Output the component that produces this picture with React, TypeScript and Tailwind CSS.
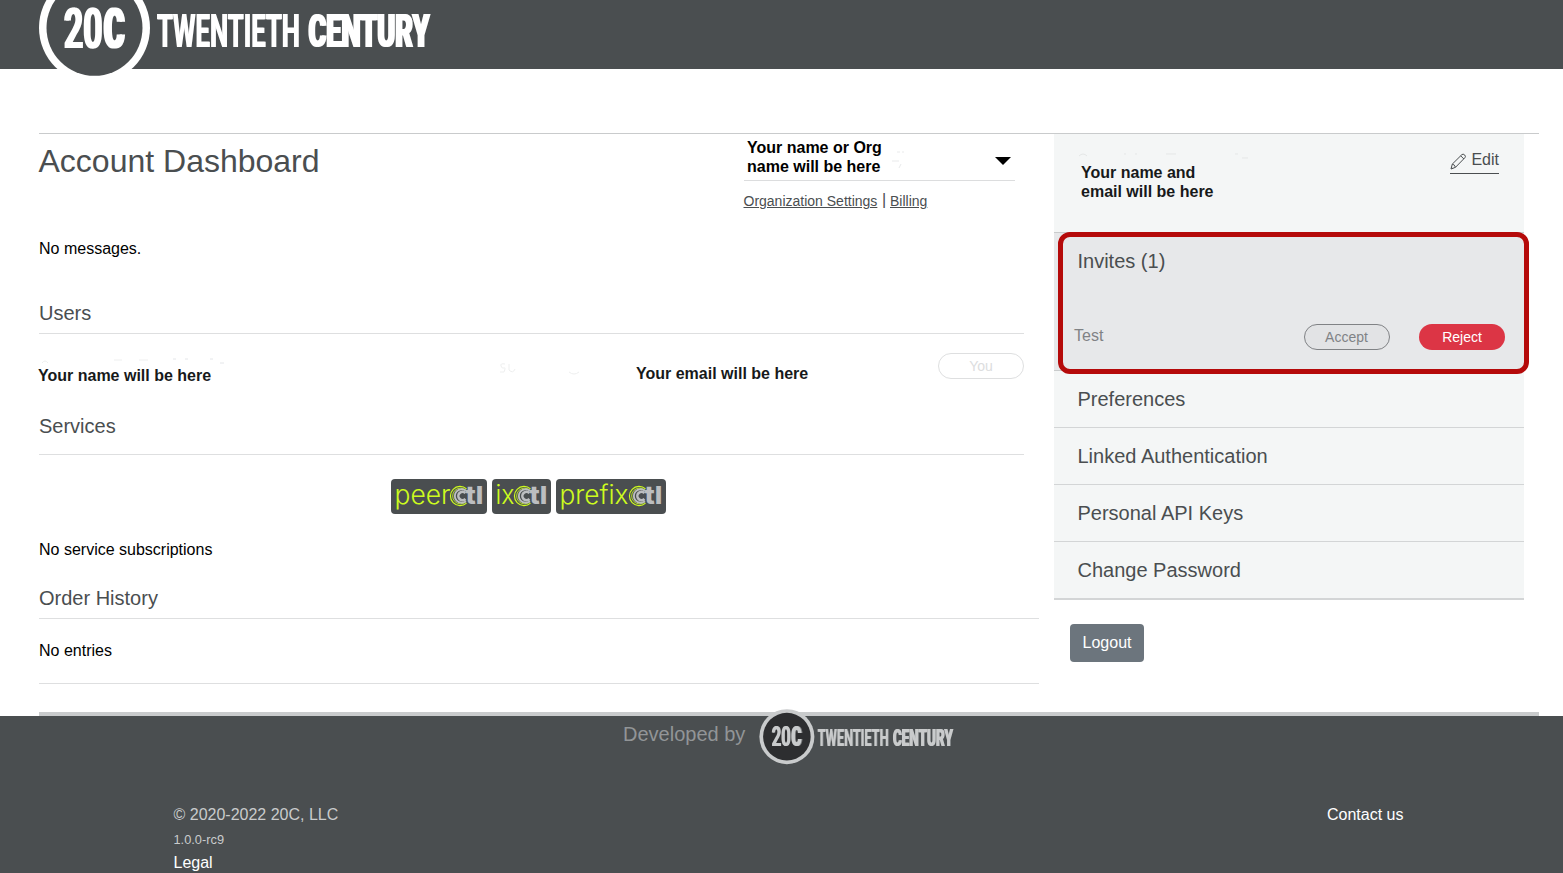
import React from 'react';

type Tone = { ring: string; disc: string; text: string };

function CenturyLogo({ tone, className }: { tone: Tone; className: string }) {
  return (
    <svg viewBox="0 0 394 112" className={className} role="img" aria-label="20C Twentieth Century">
      <circle cx="55.5" cy="55.8" r="55.5" fill={tone.ring} />
      <circle cx="55.5" cy="55.8" r="48" fill={tone.disc} />
      <g fill={tone.text} color={tone.text} className="font-['Roboto']">
        <g className="[filter:drop-shadow(1.4px_0_0)]">
          <text x="0" y="0" transform="translate(117.5 75) scale(.5 1)" fontSize="47" fontWeight="700" textLength="286" lengthAdjust="spacingAndGlyphs">TWENTIETH</text>
        </g>
        <g className="[filter:drop-shadow(2px_0_0)]">
          <text x="0" y="0" transform="translate(24 75.5) scale(.6 1)" fontSize="55" fontWeight="700" textLength="64" lengthAdjust="spacingAndGlyphs">20</text>
          <text x="0" y="0" transform="translate(268.5 75) scale(.5 1)" fontSize="47" fontWeight="900" textLength="242" lengthAdjust="spacingAndGlyphs">CENTURY</text>
        </g>
        <g className="[filter:drop-shadow(3px_0_0)]">
          <text x="0" y="0" transform="translate(63.5 75.5) scale(.6 1)" fontSize="55" fontWeight="900" textLength="34" lengthAdjust="spacingAndGlyphs">C</text>
        </g>
      </g>
    </svg>
  );
}

function CtlBadge({ name, nameWidth, width, className }: { name: string; nameWidth: number; width: number; className: string }) {
  const c = width - 28;
  return (
    <svg viewBox={`0 0 ${width} 35`} className={className} role="img" aria-label={`${name}Ctl`}>
      <rect width={width} height="35" rx="4" fill="#4a4e50" />
      <text x="3.5" y="25" fill="#cdfb1e" className="font-['Inter']" fontWeight="300" fontSize="26" textLength={nameWidth} lengthAdjust="spacingAndGlyphs">{name}</text>
      <g fill="none" strokeLinecap="butt">
        <path d={`M${c + 7.5} 9.9A9.6 9.6 0 1 0 ${c + 7.5} 24.1`} stroke="#cdfb1e" strokeWidth="1.2" />
        <path d={`M${c + 7} 11.3A7.9 7.9 0 1 0 ${c + 7} 22.7`} stroke="#cdfb1e" strokeWidth="0.8" />
        <path d={`M${c + 7} 11.8A6.8 6.8 0 1 0 ${c + 7} 22.2`} stroke="#bcbec0" strokeWidth="1.9" />
        <path d={`M${c + 6.5} 14A4.2 4.2 0 1 0 ${c + 6.5} 20`} stroke="#bcbec0" strokeWidth="2.6" />
      </g>
      <text x={width - 21.5} y="25" fill="#bcbec0" className="font-['Inter']" fontWeight="800" fontSize="25" textLength="18" lengthAdjust="spacingAndGlyphs">tl</text>
    </svg>
  );
}

const headerTone: Tone = { ring: '#ffffff', disc: '#4a4e50', text: '#ffffff' };
const footerTone: Tone = { ring: '#c9cbcc', disc: '#2d2e30', text: '#c9cbcc' };

const panels = ['Preferences', 'Linked Authentication', 'Personal API Keys', 'Change Password'];

export default function App() {
  return (
    <div className="flex h-[873px] w-full flex-col overflow-hidden bg-white font-['Liberation_Sans',Arial,sans-serif] text-base text-[#212529]">
      <header className="h-[69px] shrink-0 bg-[#4a4e50] pl-[39px]">
        <CenturyLogo tone={headerTone} className="relative -top-[28.5px] block h-[112px] w-[394px]" />
      </header>

      <div className="mt-16 ml-[39px] flex h-[579px] w-[1500px] shrink-0 border-t border-[#c9cbcc]">
        <main className="w-[1000px] shrink-0">
          <div className="flex h-[103px] w-[985px]">
            <h1 className="-ml-[0.5px] flex h-[54px] w-[705.5px] items-center text-[32px] text-[#4a4e50]">Account Dashboard</h1>
            <div className="w-[271px]">
              <button className="relative flex h-[47px] w-full items-center justify-between border-b border-[#dcddde] pr-1 pl-[3px] text-left font-bold text-black">
                <span className="-mt-px leading-[19px]">Your name or Org<br />name will be here</span>
                <svg viewBox="0 0 16 8" className="mt-[7px] h-2 w-4"><path d="M0 0h16L8 8z" /></svg>
                <svg viewBox="0 0 20 20" className="absolute top-4 left-[146px] size-5 fill-none stroke-[#e9eaeb]"><path d="M2 11h7M7 2h3M12 2h2M9 18l2-4" /></svg>
              </button>
              <p className="mt-2.5 flex h-5 items-center gap-[5px] text-sm text-[#4a4e50]">
                <a className="-ml-[0.5px] w-[133.5px] whitespace-nowrap underline">Organization Settings</a>
                <span className="-mt-0.5 w-[3px] text-base">|</span>
                <a className="underline">Billing</a>
              </p>
            </div>
          </div>

          <p className="h-6 leading-6 text-black">No messages.</p>

          <section className="mt-8 w-[985px]">
            <h2 className="flex h-[41px] items-center border-b border-[#dedfe0] text-xl text-[#4a4e50]">Users</h2>
            <div className="flex h-[72px] text-base font-bold text-[#17191a]">
              <div className="relative w-[597px] pt-8 leading-5">
                <span className="-ml-px">Your name will be here</span>
                <svg viewBox="0 0 600 30" className="absolute top-5 left-0 h-[30px] w-[600px] fill-none stroke-[#e4e6e9]"><path d="M134 5h3M146 5h3M171 5h3M181 9h4" /><path d="M3 9q3-4 6 0M75 6h8M100 6h9M466 10q-5-1-4 2t3 2 0 4h-4M470 10v6q4 4 6-1M530 18q5 4 10 0" stroke="#eeefef" /></svg>
              </div>
              <span className="w-[302px] pt-[30px] leading-5">Your email will be here</span>
              <span className="mt-[19px] flex h-[26px] w-[86px] items-center justify-center rounded-full border border-[#dedfe0] text-sm font-normal text-[#dcddde]">You</span>
            </div>
          </section>

          <section className="w-[985px]">
            <h2 className="h-[49px] border-b border-[#dedfe0] text-xl leading-10 text-[#4a4e50]">Services</h2>
            <div className="mt-6 flex h-[35px] gap-[5px] pl-[352px]">
              <CtlBadge name="peer" nameWidth={56} width={96} className="h-[35px] w-24" />
              <CtlBadge name="ix" nameWidth={19} width={59} className="h-[35px] w-[59px]" />
              <CtlBadge name="prefix" nameWidth={69} width={110} className="h-[35px] w-[110px]" />
            </div>
            <p className="mt-6 h-6 leading-6 text-black">No service subscriptions</p>
          </section>

          <section className="mt-4">
            <h2 className="flex h-[41px] items-center border-b border-[#dedfe0] text-xl text-[#4a4e50]">Order History</h2>
            <p className="h-[65px] border-b border-[#dedfe0] text-black leading-[63px]">No entries</p>
          </section>
        </main>

        <aside className="ml-[15px] w-[470px]">
          <div className="bg-[#f4f6f6] text-[#4a4e50]">
            <div className="relative flex h-[99px] items-start justify-between border-b border-[#c9cbcc] pr-[25px] pl-[27px]">
              <p className="mt-[29px] leading-[19px] font-bold text-[#17191a]">Your name and<br />email will be here</p>
              <svg viewBox="0 0 190 20" className="absolute top-4 left-6 h-5 w-[190px] fill-none stroke-[#e5e7e7]"><path d="M1 6q4-4 8 0M46 4h2M57 4h2M88 4h10M157 4h3M164 8h6" /></svg>
              <a className="mt-3.5 flex h-[26px] w-[49px] items-start justify-between border-b border-[#4a4e50] leading-6">
                <svg viewBox="0 0 17 17" className="mt-[5px] size-[17px] fill-none stroke-[#4a4e50] stroke-1"><path d="M1 16l1.3-4.9L11.8 1.7q1.3-1.2 2.8.2 1.5 1.5.3 2.8L5.5 14.3zM2.3 11.1q2.4.4 3.2 3.2M10.7 2.8l3.2 3.2M1.4 14.3l1.3 1.3" /></svg>
                Edit
              </a>
            </div>

            <section className="relative h-[138px] border-b border-[#c9cbcc] bg-[#e7e8ea]">
              <h2 className="h-14 pl-[23.5px] text-xl leading-14">Invites (1)</h2>
              <div className="mt-[34px] flex h-7 items-center pl-5">
                <span className="mb-0.5 w-[230px] text-[#808285]">Test</span>
                <button className="h-[26px] w-[86px] rounded-full border border-[#808285] bg-[#e2e3e5] pr-px text-sm text-[#808285]">Accept</button>
                <button className="ml-[29px] h-[26px] w-[86px] rounded-full bg-[#dc3545] text-sm text-white">Reject</button>
              </div>
              <span className="pointer-events-none absolute -top-px left-1 h-[142px] w-[471px] rounded-[12px] border-5 border-[#b50a0a]" />
            </section>

            {panels.map((panel) => (
              <h2 key={panel} className="h-[57px] border-b border-[#d3d5d6] pl-[23.5px] text-xl leading-14 last:h-[58px] last:border-b-2">
                {panel}
              </h2>
            ))}
          </div>
          <button className="mt-6 ml-4 h-[38px] w-[74px] rounded bg-[#6c757d] text-white">Logout</button>
        </aside>
      </div>

      <div className="ml-[39px] h-1 w-[1500px] shrink-0 bg-[#c9cbcc]" />

      <footer className="h-[157px] shrink-0 bg-[#4a4e50]">
        <div className="flex h-[87px] items-start pl-[623px]">
          <span className="mt-[3px] w-[135.5px] text-xl leading-[30px] text-[#929597]">Developed by</span>
          <CenturyLogo tone={footerTone} className="relative -top-[7px] h-[55.5px] w-[196px]" />
        </div>
        <div className="flex justify-between pr-[159.5px] pl-[173.5px]">
          <div className="text-[#c9cbcc]">
            <p className="h-6 leading-6">© 2020-2022 20C, LLC</p>
            <p className="h-6 text-[12.8px] leading-[26px]">1.0.0-rc9</p>
            <a className="block leading-6 text-white">Legal</a>
          </div>
          <a className="leading-6 text-white">Contact us</a>
        </div>
      </footer>
    </div>
  );
}
